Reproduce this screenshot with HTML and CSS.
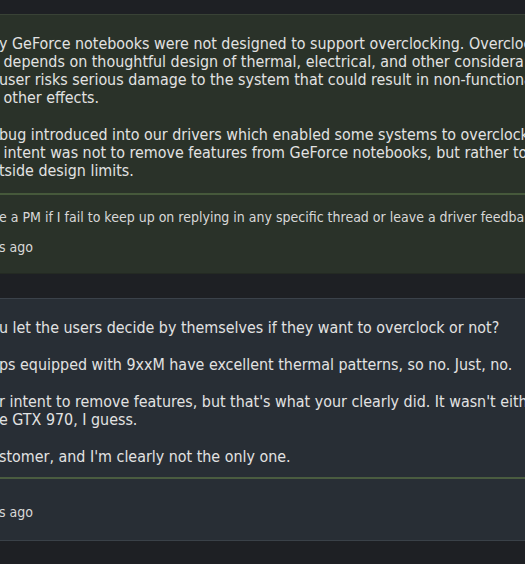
FILE: index.html
```html
<!DOCTYPE html>
<html lang="en">
<head>
  <meta charset="UTF-8" />
  <meta name="viewport" content="width=device-width, initial-scale=1.0" />
  <title>GeForce notebooks - overclocking thread</title>
  <link rel="stylesheet" href="styles.css">
</head>
<body>
  <main class="thread">

    <article class="post staff">
      <div class="post-body">
        <p>
          <span class="line">y GeForce notebooks were not designed to support overclocking. Overcloc</span>
          <span class="line"> depends on thoughtful design of thermal, electrical, and other considera</span>
          <span class="line">user risks serious damage to the system that could result in non-functiona</span>
          <span class="line"> other effects.</span>
        </p>
        <p>
          <span class="line">bug introduced into our drivers which enabled some systems to overclock</span>
          <span class="line"> intent was not to remove features from GeForce notebooks, but rather to</span>
          <span class="line">tside design limits.</span>
        </p>
      </div>
      <div class="post-foot">
        <div class="post-sig">e a PM if I fail to keep up on replying in any specific thread or leave a driver feedba</div>
        <div class="post-meta">s ago</div>
      </div>
    </article>

    <article class="post">
      <div class="post-body">
        <p><span class="line">u let the users decide by themselves if they want to overclock or not?</span></p>
        <p><span class="line">ps equipped with 9xxM have excellent thermal patterns, so no. Just, no.</span></p>
        <p>
          <span class="line">r intent to remove features, but that's what your clearly did. It wasn't eith</span>
          <span class="line">e GTX 970, I guess.</span>
        </p>
        <p><span class="line">stomer, and I'm clearly not the only one.</span></p>
      </div>
      <div class="post-foot plain">
        <div class="post-meta">s ago</div>
      </div>
    </article>

  </main>
</body>
</html>
```

FILE: styles.css
```css
body {
  margin: 0;
  background: #1e2024;
  color: #e2e2e2;
  font-family: "DejaVu Sans Condensed", "DejaVu Sans", sans-serif;
  overflow: hidden;
}
.thread {
  padding-top: 14px;
  margin-left: -1px;
  width: 560px;
}
.post {
  background: #2a3229;
  border-top: 1px solid #394236;
  border-bottom: 1px solid #242a23;
  margin-bottom: 24px;
}
.post + .post {
  background: #282e35;
  border-top: 1px solid #3b424a;
  border-bottom: 1px solid #3a4148;
}
.post-body {
  padding: 20px 0 13px;
  font-size: 15.9px;
  line-height: 18px;
}
.post + .post .post-body {
  padding-bottom: 11px;
}
.post-body p {
  margin: 0 0 19px;
}
.post-body p:last-child {
  margin-bottom: 0;
}
.line {
  display: block;
  white-space: pre;
}
.post-foot {
  border-top: 2px solid #46593b;
  padding: 13px 0 17px;
  font-size: 14px;
  line-height: 18px;
}
.post + .post .post-foot {
  border-top-color: #4a5c40;
}
.post-foot.plain {
  padding: 24px 0 19px;
}
.post-sig {
  white-space: pre;
  color: #d8d8d8;
}
.post-meta {
  margin-top: 12px;
  color: #d8d8d8;
}
.post-foot.plain .post-meta {
  margin-top: 0;
}
```
